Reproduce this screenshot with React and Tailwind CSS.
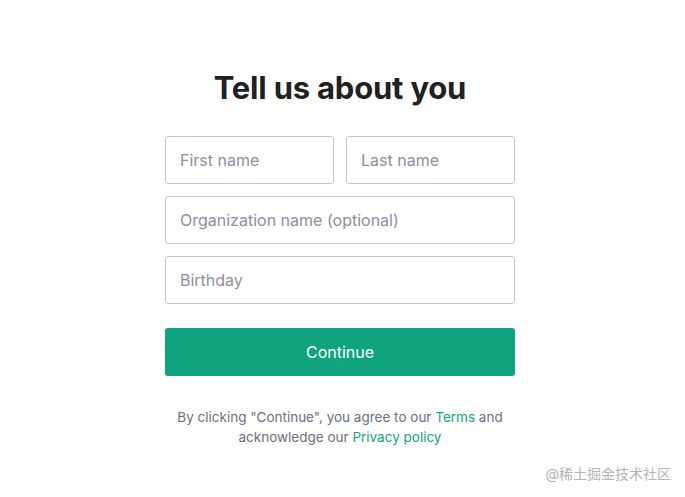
import React from "react";

export default function App() {
  const font = { fontFamily: "Inter, 'Noto Sans', sans-serif" };
  return (
    <div className="relative w-[685px] h-[497px] bg-white overflow-hidden" style={font}>
      <div className="flex flex-col items-center pt-[68px] pr-[5px]">
        <h1 className="text-[31px] leading-[40px] font-bold text-[#202123] tracking-[-0.2px]">Tell us about you</h1>
        <div className="w-[350px] mt-[28px] flex flex-col gap-[12px]">
          <div className="flex gap-[12px]">
            <input
              placeholder="First name"
              className="w-0 flex-1 h-[48px] border border-[#c2c8d0] rounded-[3px] px-[14px] pb-[1px] text-[16px] text-[#2d333a] placeholder:text-[#8e8ea0] outline-none"
            />
            <input
              placeholder="Last name"
              className="w-0 flex-1 h-[48px] border border-[#c2c8d0] rounded-[3px] px-[14px] pb-[1px] text-[16px] text-[#2d333a] placeholder:text-[#8e8ea0] outline-none"
            />
          </div>
          <input
            placeholder="Organization name (optional)"
            className="h-[48px] border border-[#c2c8d0] rounded-[3px] px-[14px] pb-[1px] text-[16px] text-[#2d333a] placeholder:text-[#8e8ea0] outline-none"
          />
          <input
            placeholder="Birthday"
            className="h-[48px] border border-[#c2c8d0] rounded-[3px] px-[14px] pb-[1px] text-[16px] text-[#2d333a] placeholder:text-[#8e8ea0] outline-none"
          />
          <button className="mt-[12px] h-[48px] rounded-[3px] bg-[#10a37f] text-white text-[16px] pb-[1px]">Continue</button>
          <p className="mt-[19px] text-center text-[13.5px] leading-[20px] text-[#6e6e80]">
            By clicking "Continue", you agree to our <span className="text-[#10a37f]">Terms</span> and
            <br />
            acknowledge our <span className="text-[#10a37f]">Privacy policy</span>
          </p>
        </div>
      </div>
      <div
        className="absolute right-[14px] bottom-[14px] text-[14px] leading-[18px] text-[#b4b4b4]"
        style={{ fontFamily: "Inter, 'Noto Sans CJK SC', sans-serif" }}
      >
        @稀土掘金技术社区
      </div>
    </div>
  );
}
